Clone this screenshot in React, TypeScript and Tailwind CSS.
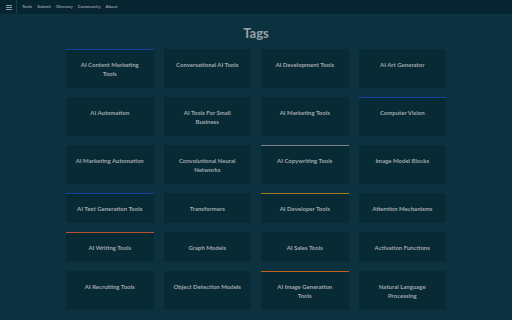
const navLinks = ["Tools", "Submit", "Glossary", "Community", "About"];

type Tag = {
  name: string;
  accent?: string;
};

const tags: Tag[] = [
  { name: "AI Content Marketing Tools", accent: "bg-[#1d3fa8]" },
  { name: "Conversational AI Tools" },
  { name: "AI Development Tools" },
  { name: "AI Art Generator" },
  { name: "AI Automation" },
  { name: "AI Tools For Small Business" },
  { name: "AI Marketing Tools" },
  { name: "Computer Vision", accent: "bg-[#1d3fa8]" },
  { name: "AI Marketing Automation" },
  { name: "Convolutional Neural Networks" },
  { name: "AI Copywriting Tools", accent: "bg-[#7c8388]" },
  { name: "Image Model Blocks" },
  { name: "AI Text Generation Tools", accent: "bg-[#1d3fa8]" },
  { name: "Transformers" },
  { name: "AI Developer Tools", accent: "bg-[#a17a1c]" },
  { name: "Attention Mechanisms" },
  { name: "AI Writing Tools", accent: "bg-[#b5532c]" },
  { name: "Graph Models" },
  { name: "AI Sales Tools" },
  { name: "Activation Functions" },
  { name: "AI Recruiting Tools" },
  { name: "Object Detection Models" },
  { name: "AI Image Generation Tools", accent: "bg-[#c2601a]" },
  { name: "Natural Language Processing" },
];

function MenuIcon() {
  return (
    <svg width="6" height="5" viewBox="0 0 6 5" aria-hidden>
      <rect x="0" y="0" width="6" height="1" fill="#8a9aa3" />
      <rect x="0" y="2" width="6" height="1" fill="#8a9aa3" />
      <rect x="0" y="4" width="6" height="1" fill="#8a9aa3" />
    </svg>
  );
}

export default function App() {
  return (
    <div
      className="min-h-[320px] w-full bg-[#0c3240] text-[#9ca3a8]"
      style={{ fontFamily: "Lato, 'Open Sans', sans-serif" }}
    >
      <nav className="flex h-[14px] items-center bg-[#072530]">
        <div className="flex h-full w-[17px] items-center justify-center border-r border-[#14404d] pl-[1px]">
          <MenuIcon />
        </div>
        <ul className="flex items-center gap-[5px] pl-[5px] text-[4.4px] font-bold text-[#8d9aa1]">
          {navLinks.map((link) => (
            <li key={link}>{link}</li>
          ))}
        </ul>
      </nav>

      <main className="mx-auto w-[380px] pt-[11px] pb-[10px]">
        <h1 className="mb-[8px] text-center text-[13px] font-bold leading-[16px] text-[#9aa3a8]">
          Tags
        </h1>
        <div className="grid grid-cols-4 gap-x-[10px] gap-y-[9px]">
          {tags.map((tag) => (
            <div key={tag.name} className="flex flex-col bg-[#082a35]">
              <div className={`h-px ${tag.accent ?? "bg-transparent"}`} />
              <div className="px-[9px] pt-[10px] pb-[10px] text-center text-[6px] font-bold leading-[9px] text-[#a0a7ad]">
                {tag.name}
              </div>
            </div>
          ))}
        </div>
      </main>
    </div>
  );
}
